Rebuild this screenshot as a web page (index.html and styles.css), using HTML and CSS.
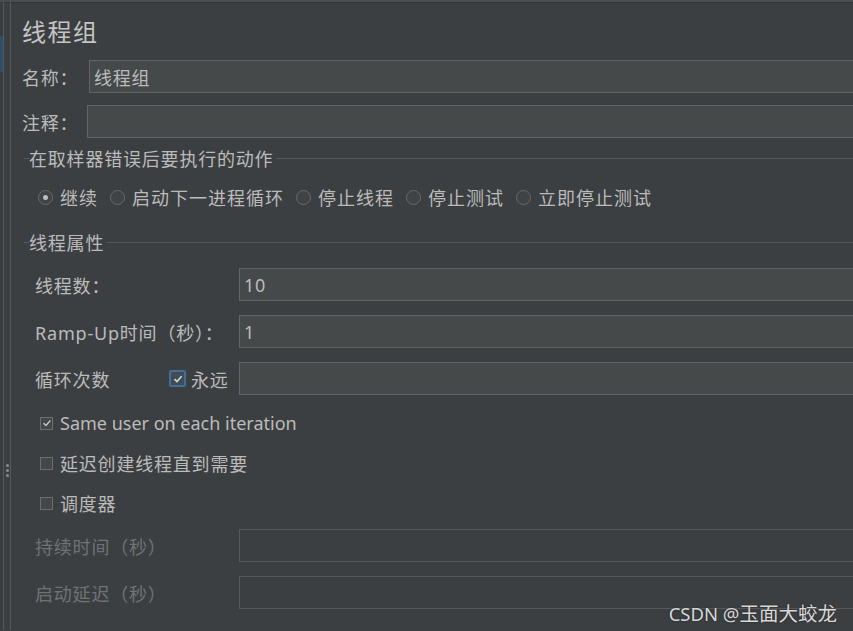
FILE: index.html
```html
<!DOCTYPE html>
<html lang="zh-CN">
<head>
    <meta charset="UTF-8">
    <title>线程组</title>
    <link rel="stylesheet" href="styles.css">
</head>
<body>

<div class="frame">
    <div class="gutter">
        <div class="gutter-sel"></div>
        <div class="gutter-dots"><i></i><i></i><i></i></div>
    </div>

    <div class="panel">
        <h1 class="title">线程组</h1>

        <div class="row">
            <label class="label name-label">名称：</label>
            <input class="field" type="text" value="线程组">
        </div>
        <div class="row">
            <label class="label note-label">注释：</label>
            <input class="field" type="text" value="">
        </div>

        <div class="group-title first"><span>在取样器错误后要执行的动作</span></div>
        <div class="radios">
            <label class="radio on"><span class="dot"></span>继续</label>
            <label class="radio"><span class="dot"></span>启动下一进程循环</label>
            <label class="radio"><span class="dot"></span>停止线程</label>
            <label class="radio"><span class="dot"></span>停止测试</label>
            <label class="radio"><span class="dot"></span>立即停止测试</label>
        </div>

        <div class="group-title second"><span>线程属性</span></div>

        <div class="props">
            <div class="row">
                <label class="label wide">线程数：</label>
                <input class="field" type="text" value="10">
            </div>
            <div class="row">
                <label class="label wide">Ramp-Up时间（秒）：</label>
                <input class="field" type="text" value="1">
            </div>
            <div class="row">
                <label class="label loop">循环次数</label>
                <label class="forever"><span class="box focus">
                    <svg width="10" height="10" viewBox="0 0 10 10"><path d="M1.5 5.2 L4 7.6 L8.6 2.2" fill="none" stroke="#d6d6d6" stroke-width="1.6"/></svg>
                </span>永远</label>
                <input class="field" type="text" value="">
            </div>

            <label class="check"><span class="box">
                <svg width="10" height="10" viewBox="0 0 10 10"><path d="M1.6 5.2 L4 7.5 L8.4 2.4" fill="none" stroke="#c8c8c8" stroke-width="1.4"/></svg>
            </span><span class="latin">Same user on each iteration</span></label>
            <label class="check"><span class="box"></span>延迟创建线程直到需要</label>
            <label class="check"><span class="box"></span>调度器</label>

            <div class="row off">
                <label class="label wide">持续时间（秒）</label>
                <input class="field" type="text" value="" disabled>
            </div>
            <div class="row off">
                <label class="label wide">启动延迟（秒）</label>
                <input class="field" type="text" value="" disabled>
            </div>
        </div>
    </div>
</div>

<div class="mark"><span class="mark-latin">CSDN @</span>玉面大蛟龙</div>

</body>
</html>
```

FILE: styles.css
```css
body { margin: 0; background: #3c3f41; color: #bbbbbb; font-family: "Noto Sans", "Noto Sans CJK SC", sans-serif; font-size: 18px; overflow: hidden; }
.frame { display: flex; height: 628px; border-top: 2px solid #4a4c4e; box-shadow: inset 0 1px 0 #313335; width: 853px; position: relative; }
.gutter { width: 8px; flex: none; border-left: 3px solid #3a3d3f; position: relative; }
.gutter::before { content: ""; position: absolute; left: 0; top: 0; bottom: 0; width: 1px; background: #56585a; }
.gutter::after { content: ""; position: absolute; right: 0; top: 0; bottom: 0; width: 1px; background: #56585a; }
.gutter-sel { position: absolute; left: -3px; top: 34px; width: 3px; height: 36px; background: #2e4f6c; }
.gutter-dots { position: absolute; left: 3px; top: 462px; display: flex; flex-direction: column; gap: 2px; }
.gutter-dots i { width: 3px; height: 3px; border-radius: 50%; background: #8a8c8e; }
.panel { flex: 1; padding-left: 11px; min-width: 0; }

.title { margin: 14px 0 0 0; font-size: 24px; font-weight: normal; line-height: 32px; letter-spacing: 1.5px; color: #c4c4c4; }

.row { display: flex; align-items: center; height: 33px; margin-top: 12px; }
.label { flex: none; letter-spacing: 0.8px; }
.name-label { width: 67px; }
.note-label { width: 65px; }
.field { flex: 1; min-width: 0; height: 33px; box-sizing: border-box; margin: 0; padding: 0 4px; background: #45494a; border: 1px solid #646464; border-right: none; color: #bbbbbb; font-family: "Noto Sans", "Noto Sans CJK SC", sans-serif; font-size: 18px; letter-spacing: 0.8px; outline: none; }

.group-title { display: flex; align-items: center; height: 24px; margin-left: 2px; letter-spacing: 0.8px; }
.group-title::before { content: ""; width: 5px; height: 1px; background: #555759; }
.group-title::after { content: ""; flex: 1; height: 1px; background: #555759; margin-left: 3px; }
.group-title.first { margin-top: 8px; }
.group-title.second { margin-top: 21px; }

.radios { display: flex; align-items: center; height: 24px; margin-top: 15px; padding-left: 16px; gap: 12px; letter-spacing: 1px; }
.radio { display: flex; align-items: center; gap: 7px; }
.dot { width: 15px; height: 15px; box-sizing: border-box; border-radius: 50%; border: 1px solid #686a6c; background: #3f4345; display: flex; align-items: center; justify-content: center; }
.radio.on .dot::after { content: ""; width: 5px; height: 5px; border-radius: 50%; background: #bdbdbd; }

.props { padding-left: 13px; }
.props .row { margin-top: 14px; }
.wide { width: 204px; }
.loop { width: 134px; }
.forever { display: flex; align-items: center; gap: 5px; width: 70px; flex: none; letter-spacing: 0.8px; }
.forever .box { width: 17px; height: 17px; }

.check { display: flex; align-items: center; height: 24px; margin-top: 16px; padding-left: 5px; gap: 7px; letter-spacing: 0.8px; }
.box { width: 13px; height: 13px; box-sizing: border-box; border: 1px solid #6b6d6f; background: #43474a; display: flex; align-items: center; justify-content: center; flex: none; }
.box.focus { border: 2px solid #466d94; border-radius: 2px; background: #3f4b56; }
.latin { letter-spacing: 0; }

.off .label { color: #707274; }
.off .field { background: #3c3f41; border-color: #56585a; }

.mark { position: absolute; right: 16px; top: 598px; font-family: "Noto Sans", "Noto Sans CJK SC", sans-serif; font-size: 19.5px; color: #d8d8d8; text-shadow: 0 0 2px #222; }
.mark-latin { font-size: 18.5px; }
```
